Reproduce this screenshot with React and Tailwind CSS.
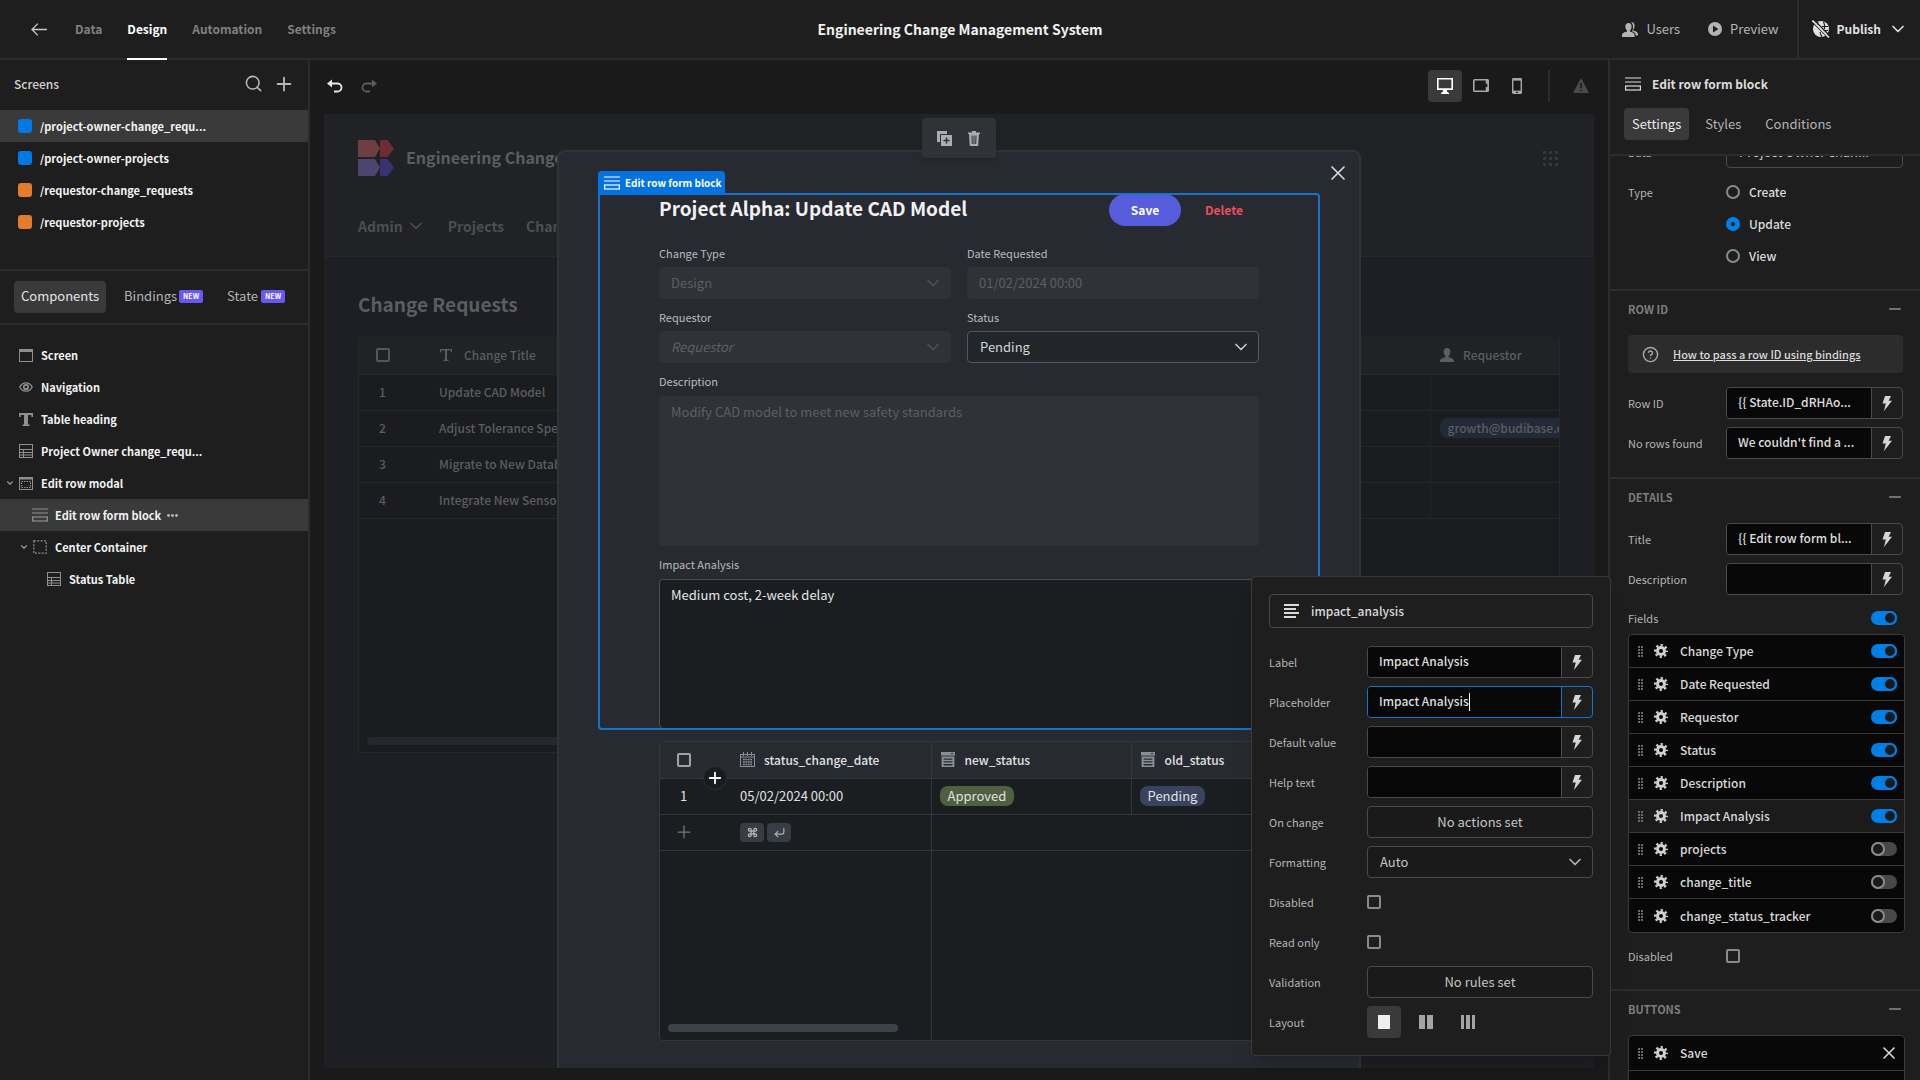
import { useState } from "react";
import { ChevronDown, CircleHelp, Command, CornerDownLeft, Minus, Plus, Search, X } from "lucide-react";

const SCREENS = [
  { path: "/project-owner-change_requ...", color: "bg-[#0078e6]" },
  { path: "/project-owner-projects", color: "bg-[#0078e6]" },
  { path: "/requestor-change_requests", color: "bg-[#e47b2d]" },
  { path: "/requestor-projects", color: "bg-[#e47b2d]" },
];

const TREE = [
  { label: "Screen", icon: WindowIcon, pad: "pl-[19px]" },
  { label: "Navigation", icon: EyeIcon, pad: "pl-[19px]" },
  { label: "Table heading", icon: BoldTextIcon, pad: "pl-[19px]" },
  { label: "Project Owner change_requ...", icon: TableIcon, pad: "pl-[19px]" },
  { label: "Edit row modal", icon: ModalIcon, pad: "pl-[5px]", open: true },
  { label: "Edit row form block", icon: FormIcon, pad: "pl-[33px]", selected: true },
  { label: "Center Container", icon: ContainerIcon, pad: "pl-[19px]", open: true },
  { label: "Status Table", icon: TableIcon, pad: "pl-[47px]" },
];

const CHANGE_REQUESTS = [
  { title: "Update CAD Model" },
  { title: "Adjust Tolerance Specs", requestor: "growth@budibase.com" },
  { title: "Migrate to New Database" },
  { title: "Integrate New Sensors" },
];

const FIELDS = [
  { name: "Change Type", on: true },
  { name: "Date Requested", on: true },
  { name: "Requestor", on: true },
  { name: "Status", on: true },
  { name: "Description", on: true },
  { name: "Impact Analysis", on: true, active: true },
  { name: "projects", on: false },
  { name: "change_title", on: false },
  { name: "change_status_tracker", on: false },
];

/* ---------- icons ---------- */

function BackIcon() {
  return (
    <svg width="16" height="13" viewBox="0 0 16 13" fill="none" stroke="currentColor" strokeWidth="1.3">
      <path d="M1 6.5H16M6.8 0.6L1 6.5L6.8 12.4" />
    </svg>
  );
}

function WindowIcon() {
  return (
    <svg width="14" height="13" viewBox="0 0 14 13" fill="none" stroke="currentColor">
      <rect x="0.5" y="0.5" width="13" height="12" />
      <rect x="0" y="0" width="14" height="3" fill="currentColor" stroke="none" />
    </svg>
  );
}

function EyeIcon() {
  return (
    <svg width="14" height="10" viewBox="0 0 14 10" fill="none" stroke="currentColor" strokeWidth="1.3">
      <path d="M0.8 5C2.2 2.2 4.4 0.8 7 0.8S11.8 2.2 13.2 5C11.8 7.8 9.6 9.2 7 9.2S2.2 7.8 0.8 5Z" />
      <circle cx="7" cy="5" r="2.2" strokeWidth="1.8" />
    </svg>
  );
}

function BoldTextIcon() {
  return (
    <svg width="14" height="13" viewBox="0 0 14 13" fill="currentColor">
      <rect x="0" y="0" width="14" height="2" />
      <rect x="0" y="0" width="1.6" height="4" />
      <rect x="12.4" y="0" width="1.6" height="4" />
      <rect x="5" y="0" width="4" height="13" />
      <rect x="3.5" y="11.5" width="7" height="1.5" />
    </svg>
  );
}

function ThinTextIcon() {
  return (
    <svg width="12" height="12" viewBox="0 0 12 12" fill="currentColor">
      <rect x="0" y="0" width="12" height="1.4" />
      <rect x="0" y="0" width="1.2" height="3.4" />
      <rect x="10.8" y="0" width="1.2" height="3.4" />
      <rect x="5" y="0" width="2" height="12" />
      <rect x="3.5" y="10.8" width="5" height="1.2" />
    </svg>
  );
}

function TableIcon() {
  return (
    <svg width="14" height="14" viewBox="0 0 14 14" fill="none" stroke="currentColor">
      <rect x="0.5" y="0.5" width="13" height="13" />
      <path d="M0 5.5H14M0 8.5H14M0 11H14M4.5 5.5V14" />
    </svg>
  );
}

function ModalIcon() {
  return (
    <svg width="14" height="13" viewBox="0 0 14 13" fill="none" stroke="currentColor">
      <rect x="0.5" y="0.5" width="13" height="12" />
      <rect x="0" y="0" width="14" height="2.5" fill="currentColor" stroke="none" />
      <rect x="2.5" y="4.5" width="9" height="6" strokeDasharray="1.5 1" />
    </svg>
  );
}

function FormIcon() {
  return (
    <svg width="16" height="14" viewBox="0 0 16 14" fill="none" stroke="currentColor" strokeWidth="1.2" className="shrink-0">
      <path d="M0 1H16M0 5H16" />
      <rect x="0.6" y="9" width="14.8" height="4" />
    </svg>
  );
}

function ContainerIcon() {
  return (
    <svg width="14" height="14" viewBox="0 0 14 14" fill="none" stroke="currentColor" strokeWidth="1.2">
      <rect x="0.8" y="0.8" width="12.4" height="12.4" strokeDasharray="2 1.4" />
    </svg>
  );
}

function UndoIcon() {
  return (
    <svg width="16" height="14" viewBox="0 0 16 14" fill="none" stroke="currentColor" strokeWidth="1.8">
      <path d="M2 4.5H10.5a4 4 0 0 1 0 8H7" />
      <path d="M5 0.5V8.5L0 4.5Z" fill="currentColor" stroke="none" />
    </svg>
  );
}

function BoltIcon() {
  return (
    <svg width="10" height="15" viewBox="0 0 10 15" fill="currentColor">
      <path d="M3 0H9L6.6 4.8H10L2 15L3.8 7.6H0.5Z" />
    </svg>
  );
}

function GearIcon() {
  return (
    <svg width="14" height="14" viewBox="0 0 14 14" fill="none" stroke="currentColor" className="shrink-0 text-[#d0d0d0]">
      <circle cx="7" cy="7" r="3.5" strokeWidth="3" />
      <circle cx="7" cy="7" r="5.8" strokeWidth="2.4" strokeDasharray="2.2 2.355" strokeDashoffset="1.1" />
    </svg>
  );
}

function GripIcon() {
  return (
    <svg width="5" height="11" viewBox="0 0 5 11" fill="currentColor" className="shrink-0 text-[#6a6a6a]">
      {[0, 3, 6, 9].map((y) => (
        <g key={y}>
          <rect x="0" y={y} width="2" height="2" />
          <rect x="3" y={y} width="2" height="2" />
        </g>
      ))}
    </svg>
  );
}

function UserIcon() {
  return (
    <svg width="14" height="14" viewBox="0 0 14 14" fill="currentColor">
      <path d="M7 0C9.2 0 10.4 1.6 10.4 3.8C10.4 5.6 9.6 7.2 8.6 8V9.2C10.8 9.8 14 10.6 14 13V14H0V13C0 10.6 3.2 9.8 5.4 9.2V8C4.4 7.2 3.6 5.6 3.6 3.8C3.6 1.6 4.8 0 7 0Z" />
    </svg>
  );
}

function UsersIcon() {
  return (
    <svg width="16" height="15" viewBox="0 0 16 15" fill="currentColor">
      <path d="M6.5 1C8.5 1 9.6 2.4 9.6 4.5C9.6 6.2 8.9 7.6 8 8.4V9.6C10 10.2 12.6 11 12.6 13.4V15H0V13.4C0 11 2.8 10.2 5 9.6V8.4C4.1 7.6 3.4 6.2 3.4 4.5C3.4 2.4 4.5 1 6.5 1Z" />
      <path d="M9.2 0.4C11.3 0 12.6 1.6 12.6 3.8C12.6 5.4 12 6.8 11.2 7.6V8.6C13.4 9.2 16 10 16 12.4V13.4H13.8C13.6 11 11.8 9.8 9.9 9.2C10.8 8 11.2 6.4 11 4.2C10.9 2.6 10.3 1.2 9.2 0.4Z" />
    </svg>
  );
}

function PlayIcon() {
  return (
    <svg width="14" height="14" viewBox="0 0 14 14">
      <circle cx="7" cy="7" r="7" fill="currentColor" />
      <path d="M5 3.6L10.4 7L5 10.4Z" fill="#1e1e1e" />
    </svg>
  );
}

function GlobeOffIcon() {
  return (
    <svg width="18" height="18" viewBox="0 0 18 18">
      <circle cx="9" cy="9" r="8" fill="currentColor" />
      <path d="M10 6.5H16M11.5 10.5H16M6 2C5.4 4 5.4 5 5.6 6M8 12C8.4 14 9 15.4 10 17M11.5 1.5C12.6 4 12.8 7 12.6 9" stroke="#1e1e1e" fill="none" strokeWidth="1.1" />
      <path d="M-1 0.5L17 18.5M1 -1L19 17" stroke="#1e1e1e" strokeWidth="1.4" />
      <path d="M0.5 0.5L17 17.5" stroke="currentColor" strokeWidth="1.6" />
    </svg>
  );
}

function DesktopIcon() {
  return (
    <svg width="16" height="16" viewBox="0 0 16 16" fill="currentColor">
      <path fillRule="evenodd" d="M0 0H16V12H10V13.5L12 15V16H4V15L6 13.5V12H0ZM1.6 1.6V10.2H14.4V1.6Z" />
    </svg>
  );
}

function TabletIcon() {
  return (
    <svg width="16" height="13" viewBox="0 0 16 13" fill="none" stroke="currentColor" strokeWidth="1.6">
      <rect x="0.8" y="0.8" width="14.4" height="11.4" rx="0.8" />
      <path d="M14 1V4.8M14 8V12" strokeWidth="2.4" />
    </svg>
  );
}

function PhoneIcon() {
  return (
    <svg width="10" height="16" viewBox="0 0 10 16">
      <rect width="10" height="16" rx="1.4" fill="currentColor" />
      <rect x="1.4" y="2.6" width="7.2" height="10" fill="#1a1a1a" />
      <circle cx="5" cy="14.3" r="0.9" fill="#1a1a1a" />
    </svg>
  );
}

function WarningIcon() {
  return (
    <svg width="16" height="15" viewBox="0 0 16 15">
      <path d="M8 0L16 15H0Z" fill="#4a4a4a" />
      <path d="M8 5V10M8 11.4V13" stroke="#1a1a1a" strokeWidth="1.6" />
    </svg>
  );
}

function DuplicateIcon() {
  return (
    <svg width="15" height="15" viewBox="0 0 15 15">
      <path d="M0 0H10V3H3V11H0Z" fill="#a9adb4" />
      <rect x="4" y="4" width="11" height="11" fill="#a9adb4" />
      <path d="M9.5 6.5V12.5M6.5 9.5H12.5" stroke="#2f3338" strokeWidth="1.4" />
    </svg>
  );
}

function TrashIcon() {
  return (
    <svg width="12" height="15" viewBox="0 0 12 15">
      <path d="M4 0H8V1.4H12V3H0V1.4H4Z" fill="#a9adb4" />
      <path d="M1 3H11L10.2 15H1.8Z" fill="#a9adb4" />
      <path d="M4 4.5L4.3 13M6 4.5V13M8 4.5L7.7 13" stroke="#2f3338" />
    </svg>
  );
}

function CalendarIcon() {
  return (
    <svg width="15" height="15" viewBox="0 0 15 15" fill="none" stroke="#8a8e95">
      <rect x="0.5" y="2.5" width="14" height="12" />
      <path d="M0.5 5H14.5M3.5 0V4M7.5 0V4M11.5 0V4" />
      <path d="M3 7.5H12M3 10H12M3 12.5H12" strokeWidth="1.6" strokeDasharray="1.8 0.6" />
    </svg>
  );
}

function OptionsIcon() {
  return (
    <svg width="14" height="15" viewBox="0 0 14 15" fill="#8a8e95">
      <rect x="0" y="0" width="14" height="3.6" />
      <path fillRule="evenodd" d="M0.6 4.6H13.4V15H0.6ZM2.6 6.4V7.8H11.4V6.4ZM2.6 9.2V10.6H11.4V9.2ZM2.6 12V13.4H11.4V12Z" />
      <path d="M9.5 1L11 2.6L12.5 1Z" fill="#272a30" />
    </svg>
  );
}

function LogoIcon() {
  return (
    <svg width="36" height="36" viewBox="0 0 36 36">
      <path d="M0 0H17L22 8.5L17 17H0Z" fill="#6f3e42" />
      <path d="M22 0H29.5L36 8.5L29.5 17H22Z" fill="#702c34" />
      <path d="M0 19H17L22 27.5L17 36H0Z" fill="#4b4570" />
      <path d="M22 19H29.5L36 27.5L29.5 36H22Z" fill="#393272" />
    </svg>
  );
}

/* ---------- shared controls ---------- */

function Checkbox({ id, label, className = "border-[#8a8a8a]" }) {
  return (
    <input
      id={id}
      type="checkbox"
      aria-label={label}
      className={`block size-[14px] appearance-none rounded-[2px] border-2 ${className}`}
    />
  );
}

function Toggle({ label, on }) {
  const [checked, setChecked] = useState(on);
  return (
    <input
      type="checkbox"
      role="switch"
      aria-label={label}
      checked={checked}
      onChange={(e) => setChecked(e.target.checked)}
      className="relative h-[14px] w-[26px] shrink-0 appearance-none rounded-full bg-[#484848] before:absolute before:left-0 before:top-0 before:size-[14px] before:rounded-full before:border-2 before:border-[#8c8c8c] before:bg-[#1a1a1a] checked:bg-[#0080e6] checked:before:left-3 checked:before:border-[#0080e6]"
    />
  );
}

function BindingInput({ id, value = "", focused = false }) {
  const border = focused ? "border-[#1473cc]" : "border-[#4a4a4a]";
  return (
    <div className={`relative flex h-8 min-w-0 flex-1 overflow-hidden rounded-[4px] border ${border}`}>
      <input
        id={id}
        type="text"
        defaultValue={value}
        className="min-w-0 flex-1 bg-[#080808] pb-[2px] pl-[11px] text-[12px] leading-5 font-medium text-[#dedede] outline-none"
      />
      {focused && <span className="absolute left-[101px] top-[6px] h-[18px] w-px bg-white" />}
      <button
        type="button"
        aria-label="Open bindings"
        className={`flex w-[31px] items-center justify-center border-l text-[#d6d6d6] ${border}`}
      >
        <BoltIcon />
      </button>
    </div>
  );
}

function PopoverRow({ label, htmlFor, children }) {
  return (
    <div className="flex h-8 items-center">
      <label htmlFor={htmlFor} className="w-[98px] shrink-0 text-[11px] leading-4 text-[#b4b4b4]">
        {label}
      </label>
      {children}
    </div>
  );
}

function SettingRow({ label, htmlFor, children }) {
  return (
    <div className="flex h-8 items-center pr-[17px] pl-[18px]">
      <label htmlFor={htmlFor} className="w-[98px] shrink-0 text-[11px] leading-4 text-[#b4b4b4]">
        {label}
      </label>
      {children}
    </div>
  );
}

function SectionHeader({ title }) {
  return (
    <div className="flex h-[38px] items-center justify-between border-t-2 border-[#2c2c2c] pr-4 pl-[18px]">
      <h3 className="text-[11px] leading-4 font-bold text-[#7d7d7d]">{title}</h3>
      <button type="button" aria-label={`Collapse ${title}`} className="text-[#8f8f8f]">
        <Minus size={18} />
      </button>
    </div>
  );
}

/* ---------- page parts ---------- */

function TopBar() {
  const tab = "relative flex h-full items-center";
  return (
    <header className="relative flex h-[60px] shrink-0 items-center border-b-2 border-[#2c2c2c] bg-[#1e1e1e] text-[13px]">
      <button type="button" aria-label="Back" className="ml-[31px] text-[#c8c8c8]">
        <BackIcon />
      </button>
      <nav className="ml-7 flex h-full gap-[25px] text-[12px] font-bold text-[#808080]">
        <a href="#data" className={tab}>Data</a>
        <a href="#design" className={`${tab} text-white`}>
          Design
          <span className="absolute inset-x-0 -bottom-[2px] h-[2px] bg-white" />
        </a>
        <a href="#automation" className={tab}>Automation</a>
        <a href="#settings" className={tab}>Settings</a>
      </nav>
      <div className="pointer-events-none absolute inset-x-0 flex justify-center">
        <h1 className="text-[14px] leading-6 font-bold text-[#f0f0f0]">Engineering Change Management System</h1>
      </div>
      <div className="ml-auto flex h-full items-center text-[#b4b4b4]">
        <button type="button" className="flex items-center gap-2">
          <UsersIcon /> Users
        </button>
        <button type="button" className="ml-7 flex items-center gap-2">
          <PlayIcon /> Preview
        </button>
        <button
          type="button"
          className="ml-[18px] flex h-full items-center gap-[7px] border-l-2 border-[#2c2c2c] pr-[12px] pl-[13px] text-[12px] font-bold text-[#e0e0e0]"
        >
          <GlobeOffIcon /> Publish <ChevronDown size={20} />
        </button>
      </div>
    </header>
  );
}

function LeftPanel() {
  return (
    <aside className="flex w-[310px] shrink-0 flex-col border-r-2 border-[#2c2c2c] bg-[#1e1e1e]">
      <div className="mb-[3px] flex h-[47px] items-center pr-[13px] pl-[14px] text-[#b8b8b8]">
        <h2 className="mr-auto text-[12px] font-medium text-[#d2d2d2]">Screens</h2>
        <button type="button" aria-label="Search screens"><Search size={19} /></button>
        <button type="button" aria-label="Add screen" className="ml-[10px]"><Plus size={22} /></button>
      </div>
      <div className="h-[159px]">
        {SCREENS.map((s, i) => (
          <button
            key={s.path}
            type="button"
            className={`flex h-8 w-full items-center gap-2 pl-[18px] text-[11px] font-bold text-[#f2f2f2] ${i === 0 ? "bg-[#3a3a3a]" : ""}`}
          >
            <span className={`size-[14px] rounded-[3px] ${s.color}`} />
            {s.path}
          </button>
        ))}
      </div>
      <div className="flex h-14 items-center border-y-2 border-[#2c2c2c] pl-[14px] text-[13px] text-[#b4b4b4]">
        <button type="button" className="h-8 rounded-[4px] bg-[#3a3a3a] px-[7px] pb-[2px] text-[#e4e4e4]">Components</button>
        <button type="button" className="ml-[18px] flex items-center gap-[2px] pb-[2px]">Bindings <NewBadge /></button>
        <button type="button" className="ml-[24px] flex items-center gap-[3px] pb-[2px]">State <NewBadge /></button>
      </div>
      <div className="pt-[14px]">
        {TREE.map(({ label, icon: Icon, pad, open, selected }) => (
          <button
            key={label}
            type="button"
            className={`flex h-8 w-full items-center text-[11px] font-bold text-[#f2f2f2] ${pad} ${selected ? "bg-[#3a3a3a]" : ""}`}
          >
            {open && <ChevronDown size={10} strokeWidth={2.6} className="mr-1 text-[#9a9a9a]" />}
            <span className="mr-2 flex w-[14px] justify-center text-[#8f8f8f]"><Icon /></span>
            {label}
            {selected && (
              <svg width="11" height="3" viewBox="0 0 11 3" fill="#b8b8b8" className="ml-[6px]">
                <circle cx="1.5" cy="1.5" r="1.4" />
                <circle cx="5.5" cy="1.5" r="1.4" />
                <circle cx="9.5" cy="1.5" r="1.4" />
              </svg>
            )}
          </button>
        ))}
      </div>
    </aside>
  );
}

function NewBadge() {
  return <span className="rounded-[2px] bg-[#6a56f0] px-1 text-[7px] leading-[13px] font-bold text-white">NEW</span>;
}

function AppPage() {
  return (
    <div className="flex h-full flex-col bg-[#1d1f24] text-[#5b5d61]">
      <div className="flex h-[143px] flex-col border-b border-[#24272b] bg-[#202225] px-[34px] pt-[26px]">
        <div className="flex items-center">
          <LogoIcon />
          <h2 className="ml-3 pb-[2px] text-[16px] leading-6 font-bold">Engineering Change Management System</h2>
          <svg width="15" height="15" viewBox="0 0 15 15" fill="#33373c" className="mr-[2px] ml-auto">
            {[0, 6, 12].map((y) => [0, 6, 12].map((x) => <rect key={`${x}-${y}`} x={x} y={y} width="3" height="3" />))}
          </svg>
        </div>
        <nav className="mt-[38px] flex items-center gap-[22px] text-[14px] leading-6 font-bold text-[#4c4e51]">
          <a href="#admin" className="flex items-center gap-[3px]">Admin <ChevronDown size={20} /></a>
          <a href="#projects">Projects</a>
          <a href="#change-requests">Change Requests</a>
        </nav>
      </div>
      <div className="px-[34px] pt-[31px]">
        <h2 className="text-[19px] leading-8 font-bold">Change Requests</h2>
        <div className="mt-[17px] h-[416px] overflow-hidden border border-t-0 border-[#25272a] bg-[#1b1c1f]">
          <table className="w-full table-fixed border-collapse text-left text-[12px] font-medium">
            <colgroup>
              <col className="w-[71px]" />
              <col className="w-[1000px]" />
              <col />
            </colgroup>
            <thead>
              <tr className="h-[37px] border-b border-[#25272a] bg-[#202225]">
                <th><div className="pl-[17px]"><Checkbox label="Select all requests" className="border-[#54565a]" /></div></th>
                <th className="font-medium"><div className="flex items-center gap-3 pl-[10px]"><ThinTextIcon /> Change Title</div></th>
                <th className="font-medium"><div className="flex items-center gap-[9px] pl-[10px]"><UserIcon /> Requestor</div></th>
              </tr>
            </thead>
            <tbody>
              {CHANGE_REQUESTS.map((row, i) => (
                <tr key={row.title} className="h-9 border-b border-[#25272a]">
                  <td className="pl-5">{i + 1}</td>
                  <td className="border-r border-[#222428] pl-[9px]">{row.title}</td>
                  <td className="pl-[9px]">
                    {row.requestor && (
                      <span className="block w-40 rounded-[8px] bg-[#222a38] pl-2 leading-5">{row.requestor}</span>
                    )}
                  </td>
                </tr>
              ))}
            </tbody>
          </table>
          <div className="mx-2 mt-[218px] h-2 rounded-full bg-[#25282e]" />
        </div>
      </div>
    </div>
  );
}

const modalLabel = "block h-6 text-[11px] leading-5 text-[#b9bbbf]";
const modalAreaLabel = "block h-[25px] text-[11px] leading-5 text-[#b9bbbf]";

function ModalSelect({ id, label, value, disabled, className, chevron }) {
  return (
    <div>
      <label htmlFor={id} className={modalLabel}>{label}</label>
      <div className="relative">
        <select
          id={id}
          disabled={disabled}
          className={`h-8 w-full appearance-none rounded-[4px] px-3 text-[13px] leading-5 opacity-100 ${className}`}
        >
          <option>{value}</option>
        </select>
        <ChevronDown size={20} className={`pointer-events-none absolute right-2 top-[6px] ${chevron}`} />
      </div>
    </div>
  );
}

function EditForm() {
  return (
    <form className="relative px-[60px]" onSubmit={(e) => e.preventDefault()}>
      <div className="flex h-8 items-start">
        <h2 className="mr-auto text-[19px] leading-7 font-bold text-[#f1f1f3]">Project Alpha: Update CAD Model</h2>
        <button type="submit" className="h-8 w-[72px] rounded-full bg-[#565cdc] text-[12px] font-bold text-white">Save</button>
        <button type="button" className="ml-2 h-8 px-4 text-[12px] font-bold text-[#e8505f]">Delete</button>
      </div>
      <div className="mt-[17px] grid grid-cols-2 gap-x-4 gap-y-2">
        <ModalSelect
          id="change-type"
          label="Change Type"
          value="Design"
          disabled
          className="bg-[#2f3236] text-[#5b6069]"
          chevron="text-[#4c5057]"
        />
        <div>
          <label htmlFor="date-requested" className={modalLabel}>Date Requested</label>
          <input
            id="date-requested"
            type="text"
            disabled
            defaultValue="01/02/2024 00:00"
            className="block h-8 w-full rounded-[4px] bg-[#2f3236] px-3 pb-[2px] text-[13px] text-[#5b6069]"
          />
        </div>
        <ModalSelect
          id="requestor"
          label="Requestor"
          value="Requestor"
          disabled
          className="bg-[#2f3236] italic text-[#5b6069]"
          chevron="text-[#4c5057]"
        />
        <ModalSelect
          id="status"
          label="Status"
          value="Pending"
          className="border border-[#54575d] bg-[#222529] text-[#d3d5d9]"
          chevron="text-[#c6c8cc]"
        />
        <div className="col-span-2">
          <label htmlFor="description" className={modalAreaLabel}>Description</label>
          <textarea
            id="description"
            disabled
            defaultValue="Modify CAD model to meet new safety standards"
            className="block h-[150px] w-full resize-none rounded-[4px] bg-[#2f3236] px-3 py-[6px] text-[13px] leading-5 text-[#5b6069]"
          />
        </div>
        <div className="col-span-2">
          <label htmlFor="impact" className={modalAreaLabel}>Impact Analysis</label>
          <textarea
            id="impact"
            defaultValue="Medium cost, 2-week delay"
            className="block h-[150px] w-full resize-none rounded-[4px] border border-[#4b4f56] bg-[#1b1e20] px-[11px] py-[5px] text-[13px] leading-5 text-[#e4e5e7]"
          />
        </div>
      </div>
      {/* selection frame with its name tab */}
      <div className="pointer-events-none absolute -inset-px rounded-[4px] rounded-tl-none border-2 border-[#1473cc]" />
      <div className="absolute -left-px -top-[23px] flex h-6 w-[127px] items-center gap-[5px] rounded-t-[4px] bg-[#0273e0] pl-[6px] text-[10px] font-bold whitespace-nowrap text-white">
        <FormIcon /> Edit row form block
      </div>
    </form>
  );
}

function StatusTable() {
  const cell = "border-r border-[#33363b]";
  return (
    <div className="relative mx-[60px] mt-3 flex h-[300px] flex-col rounded-[4px] border border-[#33363b] bg-[#1b1e20] text-[13px] text-[#e0e1e3]">
      <table className="w-full table-fixed border-collapse text-left">
        <colgroup>
          <col className="w-[71px]" />
          <col className="w-[200px]" />
          <col className="w-[200px]" />
          <col />
        </colgroup>
        <thead>
          <tr className="h-9 border-b border-[#33363b] bg-[#272a30] text-[12px]">
            <th><div className="pl-[17px]"><Checkbox label="Select all statuses" className="border-[#a0a3a8]" /></div></th>
            <th className={`font-medium ${cell}`}><div className="flex items-center gap-[9px] pl-[9px]"><CalendarIcon /> status_change_date</div></th>
            <th className={`font-medium ${cell}`}><div className="flex items-center gap-[10px] pl-[9px]"><OptionsIcon /> new_status</div></th>
            <th className="font-medium"><div className="flex items-center gap-[10px] pl-[9px]"><OptionsIcon /> old_status</div></th>
          </tr>
        </thead>
        <tbody>
          <tr className="h-9 border-b border-[#33363b]">
            <td className="pl-5">1</td>
            <td className={`pl-[9px] ${cell}`}>05/02/2024 00:00</td>
            <td className={`pl-2 ${cell}`}><span className="inline-block rounded-[8px] bg-[#4f5f3f] px-2 leading-5">Approved</span></td>
            <td className="pl-2"><span className="inline-block rounded-[8px] bg-[#38435f] px-2 leading-5">Pending</span></td>
          </tr>
          <tr className="h-9 border-b border-[#33363b]">
            <td className="pl-[14px] text-[#74777c]"><Plus size={20} strokeWidth={1.5} /></td>
            <td className={`pl-[9px] ${cell}`}>
              <div className="flex gap-[3px] text-[#b4b7bd]">
                <kbd className="flex h-[19px] w-6 items-center justify-center rounded-[4px] bg-[#383c43]"><Command size={11} strokeWidth={2.8} /></kbd>
                <kbd className="flex h-[19px] w-6 items-center justify-center rounded-[4px] bg-[#383c43]"><CornerDownLeft size={13} /></kbd>
              </div>
            </td>
            <td colSpan={2} />
          </tr>
        </tbody>
      </table>
      <div className={`flex w-[272px] flex-1 flex-col justify-end pb-2 pl-2 ${cell}`}>
        <div className="h-2 w-[230px] rounded-full bg-[#3d4148]" />
      </div>
      <button
        type="button"
        aria-label="Add row"
        className="absolute left-[43px] top-6 flex size-6 items-center justify-center rounded-full border border-[#2c2f34] bg-[#191b1d] text-white"
      >
        <Plus size={18} strokeWidth={2.4} />
      </button>
    </div>
  );
}

function Canvas() {
  return (
    <main className="flex min-w-0 flex-1 flex-col bg-[#1a1a1a] px-[14px] pb-3">
      <div className="mb-[3px] flex h-[51px] shrink-0 items-center">
        <button type="button" aria-label="Undo" className="ml-[3px] text-[#e6e6e6]"><UndoIcon /></button>
        <button type="button" aria-label="Redo" className="ml-[18px] -scale-x-100 text-[#5c5c5c]"><UndoIcon /></button>
        <div className="mr-[5px] ml-auto flex items-center text-[#a8a8a8]">
          <button type="button" aria-label="Desktop" className="flex h-8 w-[34px] items-center justify-center rounded-[4px] bg-[#3a3a3a] text-white"><DesktopIcon /></button>
          <button type="button" aria-label="Tablet" className="ml-[11px]"><TabletIcon /></button>
          <button type="button" aria-label="Phone" className="ml-[23px]"><PhoneIcon /></button>
          <span className="ml-[26px] h-8 w-[2px] bg-[#2c2c2c]" />
          <button type="button" aria-label="Warnings" className="ml-[23px]"><WarningIcon /></button>
        </div>
      </div>
      <div className="relative min-h-0 flex-1 overflow-hidden">
        <AppPage />
        <div className="absolute inset-0 flex justify-center pt-9">
          <section className="relative h-[1000px] w-[804px] shrink-0 rounded-[8px] border-2 border-[#303338] bg-[#272a30] px-[40px] pt-[42px]">
            <button type="button" aria-label="Close" className="absolute right-[9px] top-[9px] text-[#d4d6d9]"><X size={24} strokeWidth={1.7} /></button>
            <EditForm />
            <StatusTable />
          </section>
        </div>
        <div className="absolute inset-x-0 top-1 flex justify-center">
          <div className="flex h-10 w-[74px] items-center justify-center gap-4 rounded-[4px] bg-[#2f3338] pr-[2px] shadow-md">
            <button type="button" aria-label="Duplicate"><DuplicateIcon /></button>
            <button type="button" aria-label="Delete block"><TrashIcon /></button>
          </div>
        </div>
      </div>
    </main>
  );
}

function RightPanel() {
  const [type, setType] = useState("Update");
  return (
    <aside className="flex w-[312px] shrink-0 flex-col overflow-hidden border-l-2 border-[#2c2c2c] bg-[#1e1e1e]">
      <div className="h-24 shrink-0 border-b-2 border-[#2c2c2c] px-[14px]">
        <div className="flex h-12 items-center gap-[11px] pl-px text-[#dcdcdc]">
          <FormIcon />
          <h2 className="text-[12px] font-bold">Edit row form block</h2>
        </div>
        <div className="flex items-center text-[13px] text-[#b4b4b4]">
          <button type="button" className="h-8 rounded-[4px] bg-[#3a3a3a] px-2 text-[#ececec]">Settings</button>
          <button type="button" className="ml-4">Styles</button>
          <button type="button" className="ml-6">Conditions</button>
        </div>
      </div>
      <div className="min-h-0 flex-1 overflow-hidden">
        <div className="-mt-5">
          <SettingRow label="Data" htmlFor="data-source">
            <select
              id="data-source"
              className="h-8 w-[177px] appearance-none rounded-[4px] border border-[#4a4a4a] px-3 text-[13px] text-[#c8c8c8]"
            >
              <option>Project Owner chan...</option>
            </select>
          </SettingRow>
        </div>
        <fieldset className="mt-2 flex h-[113px] pl-[18px]">
          <legend className="float-left w-[98px] text-[11px] leading-8 text-[#b4b4b4]">Type</legend>
          <div>
            {["Create", "Update", "View"].map((t) => (
              <label key={t} className="flex h-8 items-center gap-[9px] text-[12px] font-medium text-[#dadada]">
                <input
                  type="radio"
                  name="form-type"
                  checked={type === t}
                  onChange={() => setType(t)}
                  className="size-[14px] appearance-none rounded-full border-2 border-[#8a8a8a] checked:border-[5px] checked:border-[#0080e6]"
                />
                {t}
              </label>
            ))}
          </div>
        </fieldset>
        <SectionHeader title="ROW ID" />
        <div className="mt-2 mr-[17px] ml-[18px] flex h-[38px] items-center gap-[14px] rounded-[4px] bg-[#2c2c2c] pl-[14px] text-[#a8a8a8]">
          <CircleHelp size={17} />
          <a href="#docs" className="text-[11px] font-medium text-[#dadada] underline">How to pass a row ID using bindings</a>
        </div>
        <div className="mt-[14px] mb-[18px] flex flex-col gap-2">
          <SettingRow label="Row ID" htmlFor="row-id"><BindingInput id="row-id" value="{{ State.ID_dRHAo..." /></SettingRow>
          <SettingRow label="No rows found" htmlFor="no-rows"><BindingInput id="no-rows" value="We couldn't find a ..." /></SettingRow>
        </div>
        <SectionHeader title="DETAILS" />
        <div className="mt-2 flex flex-col gap-2">
          <SettingRow label="Title" htmlFor="title"><BindingInput id="title" value="{{ Edit row form bl..." /></SettingRow>
          <SettingRow label="Description" htmlFor="desc"><BindingInput id="desc" /></SettingRow>
          <div className="flex h-[31px] items-center justify-between pr-[23px] pb-[2px] pl-[18px]">
            <span className="text-[11px] leading-4 text-[#b4b4b4]">Fields</span>
            <Toggle label="All fields" on />
          </div>
        </div>
        <ul className="mr-[15px] ml-[18px] divide-y divide-[#3a3a3a] overflow-hidden rounded-[4px] border border-[#3a3a3a] bg-[#080808]">
          {FIELDS.map((f) => (
            <li
              key={f.name}
              className={`flex h-[33px] items-center pr-[7px] pl-[9px] text-[12px] font-medium text-[#d8d8d8] ${f.active ? "bg-[#1b1b1b]" : ""}`}
            >
              <GripIcon />
              <button type="button" aria-label={`Configure ${f.name}`} className="mr-3 ml-[11px]"><GearIcon /></button>
              <span className="mr-auto">{f.name}</span>
              <Toggle label={f.name} on={f.on} />
            </li>
          ))}
        </ul>
        <div className="mt-[7px] mb-[17px]">
          <SettingRow label="Disabled" htmlFor="block-disabled"><Checkbox id="block-disabled" /></SettingRow>
        </div>
        <SectionHeader title="BUTTONS" />
        <ul className="mt-2 mr-[15px] ml-[18px] divide-y divide-[#3a3a3a] rounded-t-[4px] border border-[#3a3a3a] bg-[#080808]">
          {["Save", "Delete"].map((name) => (
            <li key={name} className="flex h-[35px] items-center pr-[5px] pl-[9px] text-[12px] font-medium text-[#d8d8d8]">
              <GripIcon />
              <button type="button" aria-label={`Configure ${name} button`} className="mr-3 ml-[11px]"><GearIcon /></button>
              <span className="mr-auto">{name}</span>
              <button type="button" aria-label={`Remove ${name}`}><X size={20} /></button>
            </li>
          ))}
        </ul>
      </div>
    </aside>
  );
}

function FieldPopover() {
  const box = "rounded-[4px] border border-[#4a4a4a]";
  return (
    <div className="absolute right-[309px] top-[576px] w-[360px] rounded-[4px] border border-[#3a3a3a] bg-[#1e1e1e] px-[17px] py-[17px] shadow-xl">
      <div className={`flex h-[34px] items-center gap-3 pl-[14px] text-[#dadada] ${box}`}>
        <svg width="15" height="14" viewBox="0 0 15 14" fill="currentColor">
          <rect width="15" height="2" />
          <rect y="4" width="12" height="2" />
          <rect y="8" width="15" height="2" />
          <rect y="12" width="12" height="2" />
        </svg>
        <span className="text-[12px] font-medium">impact_analysis</span>
      </div>
      <div className="mt-[18px] flex flex-col gap-2">
        <PopoverRow label="Label" htmlFor="f-label"><BindingInput id="f-label" value="Impact Analysis" /></PopoverRow>
        <PopoverRow label="Placeholder" htmlFor="f-placeholder"><BindingInput id="f-placeholder" value="Impact Analysis" focused /></PopoverRow>
        <PopoverRow label="Default value" htmlFor="f-default"><BindingInput id="f-default" /></PopoverRow>
        <PopoverRow label="Help text" htmlFor="f-help"><BindingInput id="f-help" /></PopoverRow>
        <PopoverRow label="On change" htmlFor="f-change">
          <button id="f-change" type="button" className={`h-8 flex-1 bg-[#1a1a1a] text-[13px] text-[#c4c4c4] ${box}`}>No actions set</button>
        </PopoverRow>
        <PopoverRow label="Formatting" htmlFor="f-format">
          <div className="relative flex-1">
            <select id="f-format" className={`block h-8 w-full appearance-none bg-[#1a1a1a] px-3 text-[13px] text-[#c4c4c4] ${box}`}>
              <option>Auto</option>
            </select>
            <ChevronDown size={20} className="pointer-events-none absolute right-2 top-[6px] text-[#b4b4b4]" />
          </div>
        </PopoverRow>
        <PopoverRow label="Disabled" htmlFor="f-disabled"><Checkbox id="f-disabled" /></PopoverRow>
        <PopoverRow label="Read only" htmlFor="f-readonly"><Checkbox id="f-readonly" /></PopoverRow>
        <PopoverRow label="Validation" htmlFor="f-validation">
          <button id="f-validation" type="button" className={`h-8 flex-1 bg-[#1a1a1a] text-[13px] text-[#c4c4c4] ${box}`}>No rules set</button>
        </PopoverRow>
        <PopoverRow label="Layout" htmlFor="f-layout">
          <div className="flex gap-2 text-[#a4a4a4]">
            <button id="f-layout" type="button" aria-label="One column" className="flex h-8 w-[34px] items-center justify-center rounded-[4px] bg-[#3a3a3a] text-[#eeeeee]">
              <svg width="12" height="14" viewBox="0 0 12 14" fill="currentColor"><rect width="12" height="14" /></svg>
            </button>
            <button type="button" aria-label="Two columns" className="flex h-8 w-[34px] items-center justify-center">
              <svg width="14" height="14" viewBox="0 0 14 14" fill="currentColor"><rect width="6" height="14" /><rect x="8" width="6" height="14" /></svg>
            </button>
            <button type="button" aria-label="Three columns" className="flex h-8 w-[34px] items-center justify-center">
              <svg width="14" height="14" viewBox="0 0 14 14" fill="currentColor"><rect width="3" height="14" /><rect x="5" width="4" height="14" /><rect x="11" width="3" height="14" /></svg>
            </button>
          </div>
        </PopoverRow>
      </div>
    </div>
  );
}

export default function App() {
  return (
    <div className="relative flex h-screen flex-col overflow-hidden bg-[#1a1a1a] font-['Noto_Sans_CJK_JP','Noto_Sans_CJK_SC',sans-serif] text-[13px] leading-5">
      <TopBar />
      <div className="flex min-h-0 flex-1">
        <LeftPanel />
        <Canvas />
        <RightPanel />
      </div>
      <FieldPopover />
    </div>
  );
}
